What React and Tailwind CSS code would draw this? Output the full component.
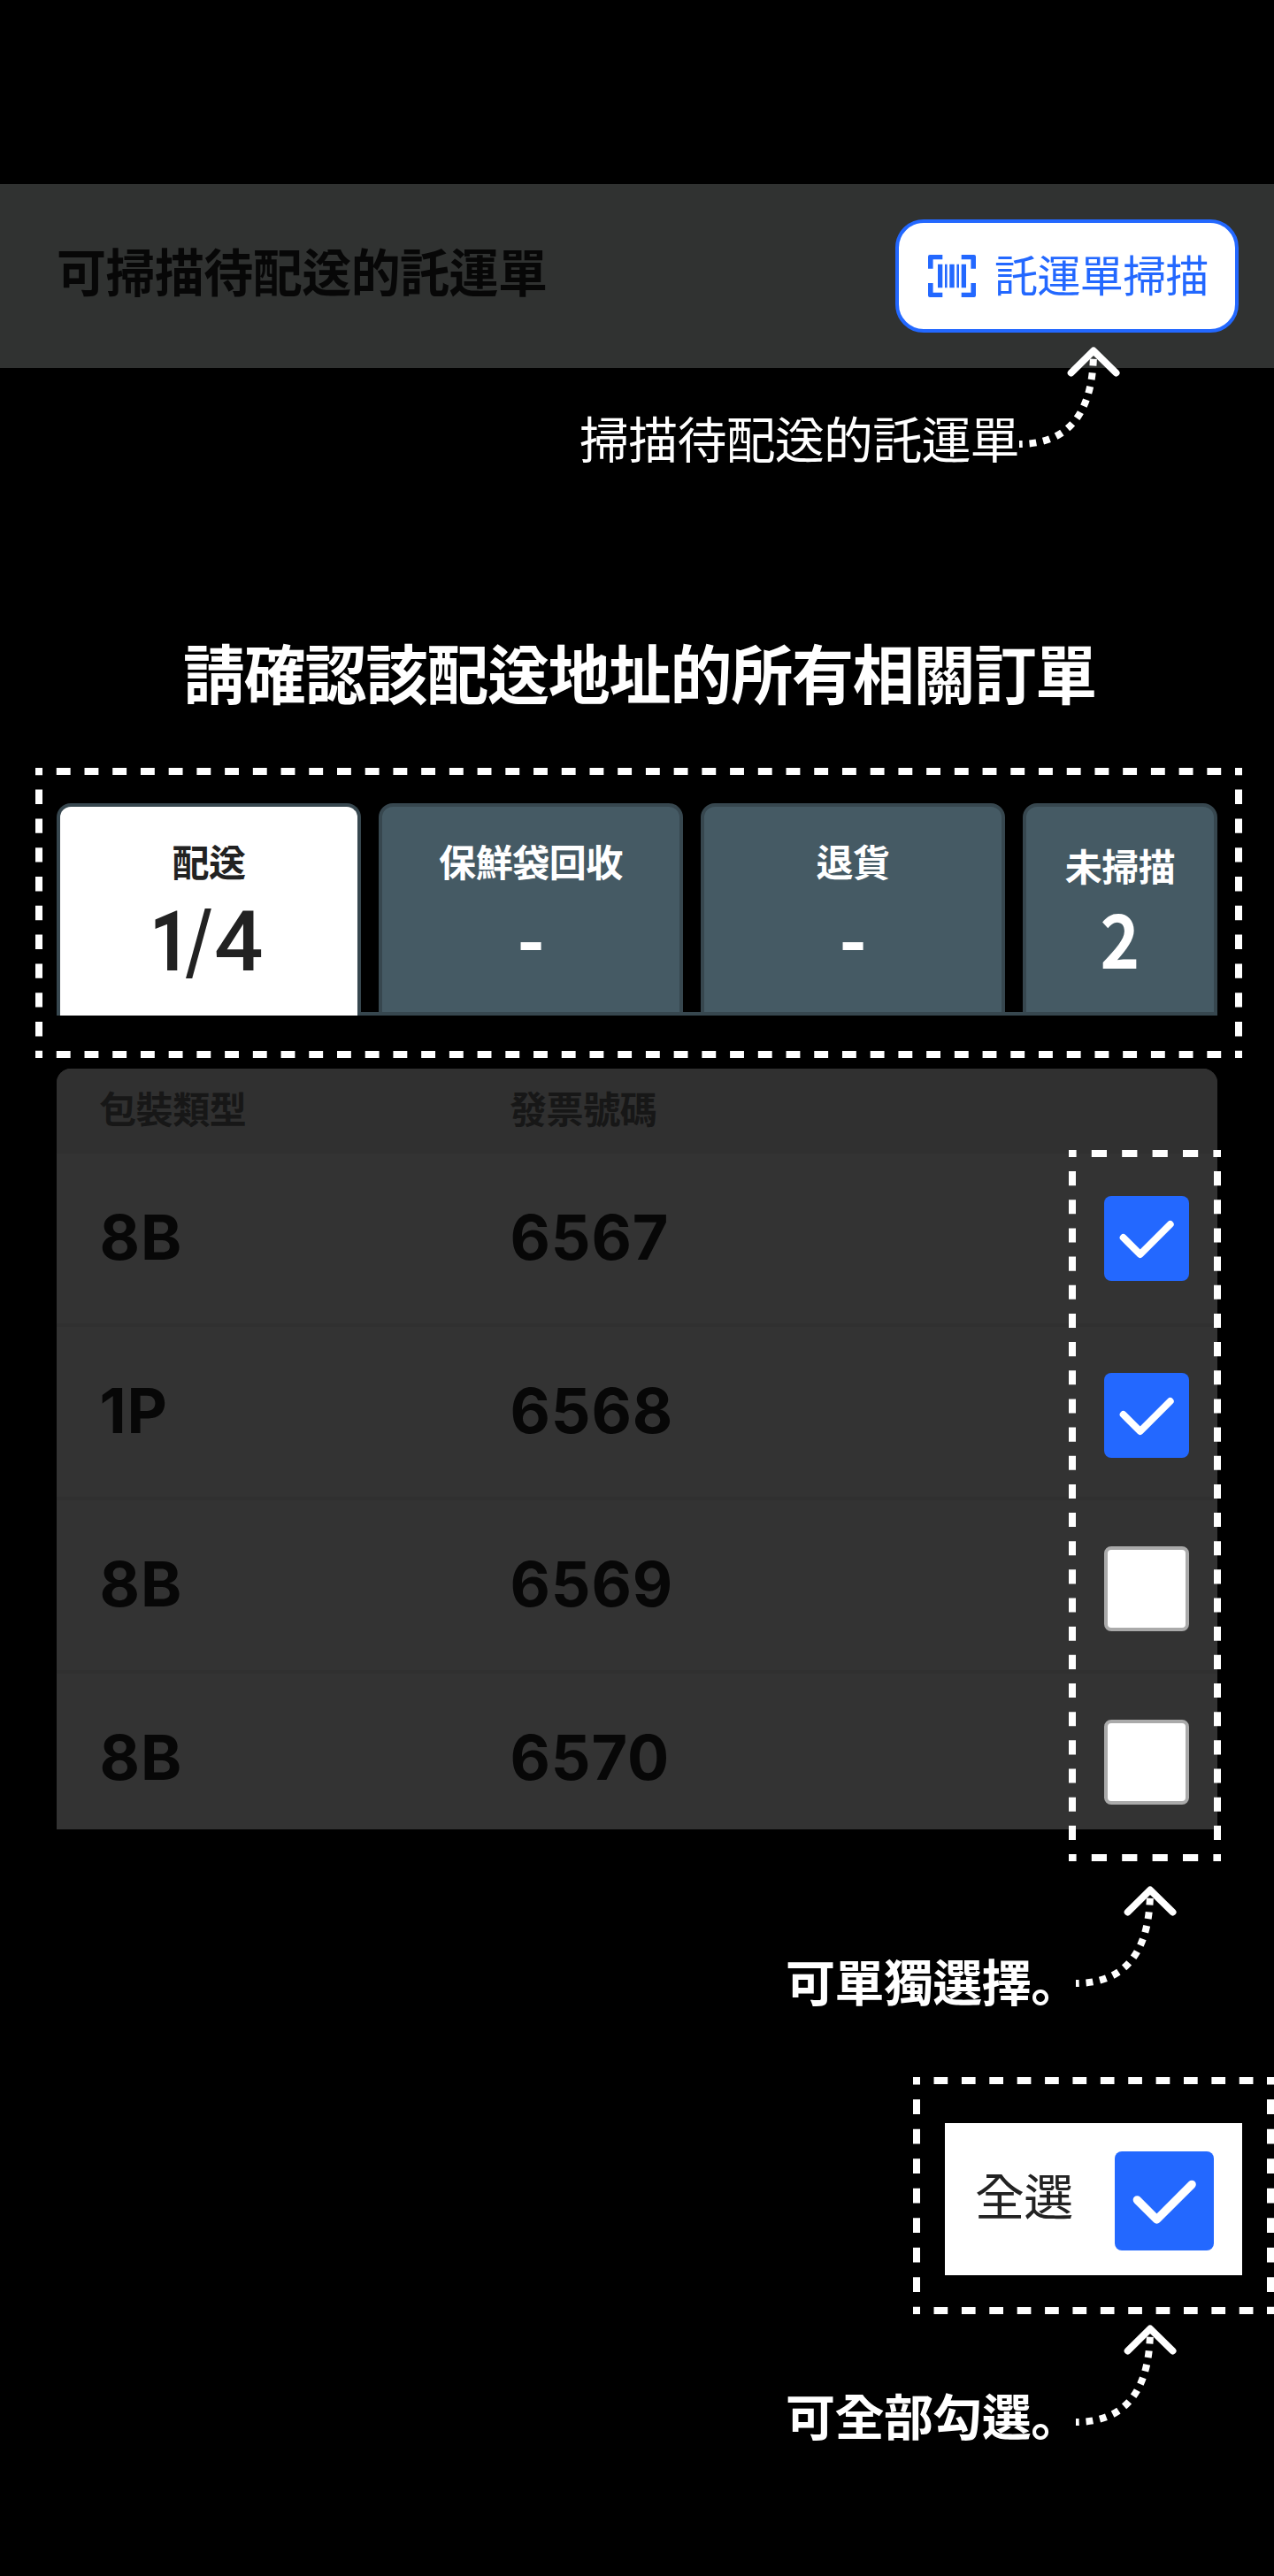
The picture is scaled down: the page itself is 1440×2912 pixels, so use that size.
const CJK = "font-['Noto_Sans_CJK_KR',sans-serif]";

// Dashed highlight frame; dashes are centred on every corner and spread evenly along each side.
function Dashes({ width, height }) {
  const side = (length) => {
    const d = length / Math.round(length / 32) / 2;
    return { strokeDasharray: `${d} ${d}`, strokeDashoffset: d / 2 };
  };
  const h = side(width);
  const v = side(height);
  return (
    <svg
      className="pointer-events-none absolute inset-0"
      width={width}
      height={height}
      viewBox={`0 0 ${width} ${height}`}
      fill="none"
      stroke="white"
      strokeWidth="8"
    >
      <path d={`M0 4H${width}`} {...h} />
      <path d={`M0 ${height - 4}H${width}`} {...h} />
      <path d={`M4 0V${height}`} {...v} />
      <path d={`M${width - 4} 0V${height}`} {...v} />
    </svg>
  );
}

function CurvedArrow({ className }) {
  return (
    <svg className={className} width="120" height="118" viewBox="0 0 120 118" fill="none" stroke="white" strokeWidth="8">
      <path d="M0 110C44 110 84 88 84 5" strokeDasharray="7.85 7.85" strokeDashoffset="4.2" />
      <path d="M58.7 29.5L84 4.5L109.5 29.5" strokeLinecap="round" strokeLinejoin="round" />
    </svg>
  );
}

function CheckBox({ checked, className }) {
  if (!checked) return <span className={`block rounded-lg border-4 border-[#aaaaaa] bg-white ${className}`} />;
  return (
    <span className={`block rounded-lg bg-[#2368ff] ${className}`}>
      <svg
        className="size-full"
        viewBox="0 0 96 96"
        fill="none"
        stroke="white"
        strokeWidth="8"
        strokeLinecap="round"
        strokeLinejoin="round"
      >
        <path d="M21.7 47L40.7 66L74.7 32" />
      </svg>
    </span>
  );
}

function ScanIcon() {
  return (
    <svg className="shrink-0" width="54" height="48" viewBox="0 0 54 48" fill="#2368ff">
      <path d="M2 0H16.3V5.3H5.6V15.8H0V2Q0 0 2 0Z" />
      <path d="M37.7 0H52Q54 0 54 2V15.8H48.4V5.3H37.7Z" />
      <path d="M0 32H5.6V42.7H16.3V48H2Q0 48 0 46Z" />
      <path d="M48.4 32H54V46Q54 48 52 48H37.7V42.7H48.4Z" />
      <path d="M11 10.7H16.3V37.3H11ZM19 10.7H21.6V37.3H19ZM24.3 10.7H29.7V37.3H24.3ZM32.4 10.7H35V37.3H32.4ZM37.7 10.7H43V37.3H37.7Z" />
    </svg>
  );
}

function Fraction({ done, total }) {
  return (
    <span className="flex pt-[11px] pr-[10px] font-['Roboto'] text-[94px] leading-[100px] font-medium">
      <span className="scale-x-85 font-bold">{done}</span>
      <span className="-ml-3 scale-x-[0.83] scale-y-[1.09]">/</span>
      <span className="-ml-px scale-x-[1.04]">{total}</span>
    </span>
  );
}

const tabs = [
  { label: "配送", value: <Fraction done="1" total="4" />, width: "w-[344px]", active: true },
  { label: "保鮮袋回收", value: "-", width: "w-[344px]", valueStyle: "pt-1" },
  { label: "退貨", value: "-", width: "w-[344px]", valueStyle: "pt-1" },
  { label: "未掃描", value: "2", width: "w-[220px]", low: true, valueStyle: "scale-x-90" },
];

const rows = [
  { type: "8B", invoice: "6567", checked: true, size: "h-[196px] border-b-4 pt-12", text: "pt-[3px]" },
  { type: "1P", invoice: "6568", checked: true, size: "h-[196px] border-b-4 pt-[52px]", text: "-mt-px" },
  { type: "8B", invoice: "6569", checked: false, size: "h-[196px] border-b-4 pt-[52px]", text: "-mt-px" },
  { type: "8B", invoice: "6570", checked: false, size: "h-[176px] pt-[52px]", text: "-mt-px" },
];

export default function App() {
  return (
    <div
      className={`flex h-[2912px] w-[1440px] flex-col overflow-hidden bg-black pt-[208px] whitespace-nowrap text-white ${CJK}`}
    >
      <header className="relative flex h-[208px] items-center justify-between bg-[#303231] pr-10 pl-16">
        <h2 className="scale-y-[1.03] pb-3.5 text-[56px] leading-[80px] font-bold tracking-[-0.01em] text-[#070707]">
          可掃描待配送的託運單
        </h2>
        <button className="flex h-32 w-[388px] items-center rounded-[32px] border-4 border-[#2368ff] bg-white pl-[33px] text-[#2368ff]">
          <ScanIcon />
          <span className="ml-[21px] pb-1.5 text-[49px] leading-[72px] tracking-[-0.6px]">託運單掃描</span>
        </button>
        <CurvedArrow className="absolute top-[184px] left-[1152px]" />
      </header>

      <p className="mt-9 ml-[655px] h-[84px] text-[56px] leading-[84px] tracking-[-0.8px]">掃描待配送的託運單</p>

      <h1 className="mt-[169px] h-[108px] scale-y-[1.04] pl-1.5 text-center text-[70px] leading-[108px] font-bold tracking-[-1.2px]">
        請確認該配送地址的所有相關訂單
      </h1>

      <section className="relative mt-[55px] ml-10 h-[328px] w-[1364px] pt-10 pl-6">
        <div className="flex h-60 w-[1312px] gap-5 bg-[linear-gradient(#37474f,#37474f)] bg-[length:100%_4px] bg-bottom bg-no-repeat">
          {tabs.map((t) => (
            <div
              key={t.label}
              className={`flex h-60 flex-col items-center rounded-t-2xl border-4 border-[#37474f] ${t.width} ${
                t.active ? "border-b-0 bg-white text-[#222222]" : "bg-[#455a64]"
              } ${t.low ? "pt-[35px]" : "pt-[30px]"}`}
            >
              <span className="text-[42px] leading-[62px] font-bold tracking-[-0.01em]">{t.label}</span>
              {t.active ? t.value : <span className={`text-[84px] leading-[100px] font-bold ${t.valueStyle}`}>{t.value}</span>}
            </div>
          ))}
        </div>
        <Dashes width={1364} height={328} />
      </section>

      <section className="relative mt-3 ml-16 h-[860px] w-[1312px]">
        <div className="overflow-hidden rounded-t-2xl bg-[#333333]">
          <div className="flex h-24 bg-[#303030] pl-12 text-[42px] leading-[88px] font-bold tracking-[-0.01em] text-[#171717]">
            <span className="w-[464px]">包裝類型</span>
            <span>發票號碼</span>
          </div>
          {rows.map((r) => (
            <div key={r.invoice} className={`flex border-[#303030] pr-8 pl-12 ${r.size}`}>
              <div
                className={`flex pl-[0.5px] font-['Inter'] text-[70px] leading-[88px] font-bold tracking-[0.9px] text-[#070707] ${r.text}`}
              >
                <span className="w-[464px]">{r.type}</span>
                <span>{r.invoice}</span>
              </div>
              <CheckBox checked={r.checked} className="ml-auto size-24" />
            </div>
          ))}
        </div>
        <div className="absolute top-[92px] left-[1144px] h-[804px] w-[172px]">
          <Dashes width={172} height={804} />
        </div>
      </section>

      <div className="mt-[60px] ml-[888px] flex h-[160px]">
        <p className="w-[328px] pt-[68px] text-[56px] leading-[84px] font-bold tracking-[-0.01em]">可單獨選擇。</p>
        <CurvedArrow className="mt-1" />
      </div>

      <section className="relative mt-[60px] ml-[1032px] h-[268px] w-[408px] pt-[52px] pl-9">
        <div className="flex h-[172px] w-[336px] items-center justify-between bg-white pr-8 pl-[34px] text-[#222222]">
          <span className="pb-3 text-[56px] leading-[84px] tracking-[-0.8px]">全選</span>
          <CheckBox checked className="mt-1 size-28" />
        </div>
        <Dashes width={408} height={268} />
      </section>

      <div className="mt-2 ml-[888px] flex">
        <p className="w-[328px] pt-[63px] text-[56px] leading-[84px] font-bold tracking-[-0.01em]">可全部勾選。</p>
        <CurvedArrow className="mt-1" />
      </div>
    </div>
  );
}
